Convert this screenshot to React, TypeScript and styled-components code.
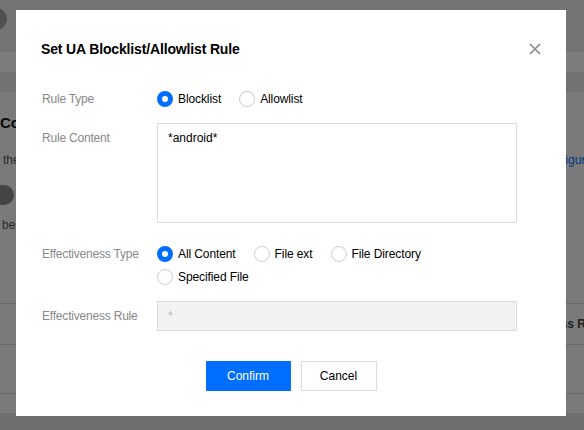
import React from "react";
import styled, { createGlobalStyle } from "styled-components";

const GlobalStyle = createGlobalStyle`
  html, body { margin: 0; padding: 0; }
  body {
    font-family: "Liberation Sans", Arial, sans-serif;
    width: 584px;
    height: 430px;
    overflow: hidden;
    background: #f3f3f3;
  }
  * { box-sizing: border-box; }
`;

/* ---------- background page ---------- */
const Page = styled.div`
  width: 584px;
  height: 430px;
  overflow: hidden;
  background: #f4f4f4;
  display: flex;
  flex-direction: column;
`;

const TopNav = styled.div`
  height: 52px;
  flex: none;
  background: #e8e8e8;
  display: flex;
  align-items: flex-start;
  padding-top: 8px;
`;

const Avatar = styled.div`
  width: 22px;
  height: 22px;
  border-radius: 50%;
  background: #a0a0a0;
  margin-left: -15px;
`;

const Band = styled.div<{ $bg: string }>`
  height: 20px;
  flex: none;
  background: ${(p) => p.$bg};
`;

const Content = styled.div`
  display: flex;
  flex-direction: column;
  flex: 1;
`;

const Heading = styled.div`
  margin-top: 21px;
  font-weight: 700;
  font-size: 15px;
  line-height: 20px;
  color: #111;
  white-space: nowrap;
`;

const DescRow = styled.div`
  margin-top: 17px;
  display: flex;
  justify-content: space-between;
  font-size: 12px;
  line-height: 20px;
  color: #555;
  white-space: nowrap;
`;

const DescText = styled.span`
  margin-left: 3px;
`;

const Link = styled.span`
  color: #006eff;
  margin-right: -8px;
`;

const Toggle = styled.div`
  margin-top: 15px;
  margin-left: -22px;
  width: 36px;
  height: 20px;
  border-radius: 10px;
  background: #888;
`;

const Desc = styled.div`
  margin-top: 10px;
  margin-left: 2px;
  font-size: 12px;
  line-height: 20px;
  color: #555;
  white-space: nowrap;
`;

const TableRow = styled.div<{ $h: number; $top?: number }>`
  height: ${(p) => p.$h}px;
  margin-top: ${(p) => p.$top ?? 0}px;
  border-top: 1px solid #d2d2d2;
  display: flex;
  align-items: center;
  font-size: 12px;
  font-weight: 700;
  color: #444;
  white-space: nowrap;
`;

const HeadCell = styled.span`
  padding-left: 532px;
`;

const PageFooter = styled.div`
  flex: 1;
  background: #dcdcdc;
`;

/* ---------- modal ---------- */
const Overlay = styled.div`
  position: fixed;
  inset: 0;
  background: rgba(0, 0, 0, 0.5);
  display: flex;
  align-items: flex-start;
  padding: 10px 0 0 16px;
`;

const Modal = styled.div`
  width: 550px;
  background: #fff;
  padding: 29px 25px 25px 25px;
  display: flex;
  flex-direction: column;
`;

const Header = styled.div`
  display: flex;
  justify-content: space-between;
  align-items: center;
  height: 20px;
`;

const Title = styled.h3`
  margin: 0;
  font-size: 14px;
  line-height: 20px;
  font-weight: 700;
  color: #000;
  letter-spacing: -0.15px;
`;

const CloseBtn = styled.button`
  border: 0;
  padding: 0;
  background: none;
  width: 12px;
  height: 12px;
  display: flex;
  cursor: pointer;
`;

const Form = styled.div`
  margin-top: 30px;
  display: flex;
  flex-direction: column;
`;

const FormRow = styled.div<{ $top?: number }>`
  display: flex;
  align-items: flex-start;
  margin-top: ${(p) => p.$top ?? 0}px;
`;

const Label = styled.div<{ $pad?: number }>`
  width: 116px;
  flex: none;
  font-size: 12px;
  line-height: 20px;
  color: #888;
  letter-spacing: -0.2px;
  padding-top: ${(p) => p.$pad ?? 0}px;
  padding-left: 1px;
`;

const Control = styled.div`
  width: 360px;
`;

const RadioGroup = styled.div`
  display: flex;
  flex-wrap: wrap;
  column-gap: 18px;
  row-gap: 3.4px;
`;

const RadioItem = styled.label`
  display: inline-flex;
  align-items: center;
  gap: 5px;
  height: 20px;
  font-size: 12px;
  color: #000;
  letter-spacing: -0.1px;
  cursor: pointer;
`;

const RadioCircle = styled.span<{ $checked?: boolean }>`
  width: 16px;
  height: 16px;
  border-radius: 50%;
  background: #fff;
  border: ${(p) => (p.$checked ? "5px solid #006eff" : "1px solid #ccc")};
  flex: none;
`;

const TextArea = styled.textarea`
  display: block;
  width: 360px;
  height: 100px;
  border: 1px solid #ddd;
  padding: 5px 10px;
  font-family: "Liberation Sans", Arial, sans-serif;
  font-size: 12px;
  line-height: 18px;
  color: #000;
  resize: none;
  outline: none;
  margin: 0;
`;

const Input = styled.input`
  display: block;
  width: 360px;
  height: 30px;
  border: 1px solid #ddd;
  background: #f2f2f2;
  padding: 0 10px;
  font-family: "Liberation Sans", Arial, sans-serif;
  font-size: 12px;
  color: #bbb;
  margin: 0;
  outline: none;
  &:disabled { color: #bbb; -webkit-text-fill-color: #bbb; opacity: 1; }
`;

const Footer = styled.div`
  margin-top: 30px;
  display: flex;
  justify-content: center;
  gap: 10px;
`;

const Button = styled.button<{ $primary?: boolean; $w: number }>`
  width: ${(p) => p.$w}px;
  height: 30px;
  padding: 0;
  font-family: "Liberation Sans", Arial, sans-serif;
  font-size: 12px;
  cursor: pointer;
  border: 1px solid ${(p) => (p.$primary ? "#006eff" : "#ddd")};
  background: ${(p) => (p.$primary ? "#006eff" : "#fff")};
  color: ${(p) => (p.$primary ? "#fff" : "#000")};
`;

const CloseIcon = () => (
  <svg width="12" height="12" viewBox="0 0 12 12">
    <path d="M1 1 L11 11 M11 1 L1 11" stroke="#888" strokeWidth="1.6" fill="none" />
  </svg>
);

const Radio = ({ label, checked }: { label: string; checked?: boolean }) => (
  <RadioItem>
    <RadioCircle $checked={checked} />
    {label}
  </RadioItem>
);

export default function App() {
  return (
    <>
      <GlobalStyle />
      <Page>
        <TopNav>
          <Avatar />
        </TopNav>
        <Band $bg="#fbfbfb" />
        <Band $bg="#e6e6e6" />
        <Content>
          <Heading>Content Configuration</Heading>
          <DescRow>
            <DescText>the rules</DescText>
            <Link>Configure</Link>
          </DescRow>
          <Toggle />
          <Desc>be applied</Desc>
          <TableRow $h={41} $top={68}>
            <HeadCell>Access Rules</HeadCell>
          </TableRow>
          <TableRow $h={49} />
          <TableRow $h={20} />
          <PageFooter />
        </Content>
      </Page>
      <Overlay>
        <Modal>
          <Header>
            <Title>Set UA Blocklist/Allowlist Rule</Title>
            <CloseBtn aria-label="Close">
              <CloseIcon />
            </CloseBtn>
          </Header>
          <Form>
            <FormRow>
              <Label>Rule Type</Label>
              <Control>
                <RadioGroup>
                  <Radio label="Blocklist" checked />
                  <Radio label="Allowlist" />
                </RadioGroup>
              </Control>
            </FormRow>
            <FormRow $top={14}>
              <Label $pad={5}>Rule Content</Label>
              <Control>
                <TextArea readOnly defaultValue="*android*" />
              </Control>
            </FormRow>
            <FormRow $top={21}>
              <Label>Effectiveness Type</Label>
              <Control>
                <RadioGroup>
                  <Radio label="All Content" checked />
                  <Radio label="File ext" />
                  <Radio label="File Directory" />
                  <Radio label="Specified File" />
                </RadioGroup>
              </Control>
            </FormRow>
            <FormRow $top={14}>
              <Label $pad={5}>Effectiveness Rule</Label>
              <Control>
                <Input disabled value="*" readOnly />
              </Control>
            </FormRow>
          </Form>
          <Footer>
            <Button $primary $w={85}>Confirm</Button>
            <Button $w={76}>Cancel</Button>
          </Footer>
        </Modal>
      </Overlay>
    </>
  );
}
